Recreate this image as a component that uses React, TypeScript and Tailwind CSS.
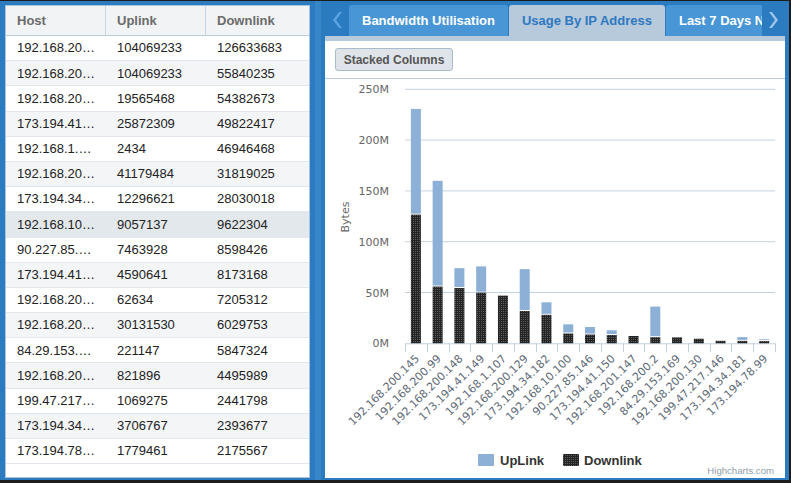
import React from "react";

const rows = [
  { host: "192.168.20…", full: "192.168.200.145", up: 104069233, down: 126633683 },
  { host: "192.168.20…", full: "192.168.200.99", up: 104069233, down: 55840235 },
  { host: "192.168.20…", full: "192.168.200.148", up: 19565468, down: 54382673 },
  { host: "173.194.41…", full: "173.194.41.149", up: 25872309, down: 49822417 },
  { host: "192.168.1.…", full: "192.168.1.107", up: 2434, down: 46946468 },
  { host: "192.168.20…", full: "192.168.200.129", up: 41179484, down: 31819025 },
  { host: "173.194.34…", full: "173.194.34.182", up: 12296621, down: 28030018 },
  { host: "192.168.10…", full: "192.168.10.100", up: 9057137, down: 9622304 },
  { host: "90.227.85.…", full: "90.227.85.146", up: 7463928, down: 8598426 },
  { host: "173.194.41…", full: "173.194.41.150", up: 4590641, down: 8173168 },
  { host: "192.168.20…", full: "192.168.201.147", up: 62634, down: 7205312 },
  { host: "192.168.20…", full: "192.168.200.2", up: 30131530, down: 6029753 },
  { host: "84.29.153.…", full: "84.29.153.169", up: 221147, down: 5847324 },
  { host: "192.168.20…", full: "192.168.200.130", up: 821896, down: 4495989 },
  { host: "199.47.217…", full: "199.47.217.146", up: 1069275, down: 2441798 },
  { host: "173.194.34…", full: "173.194.34.181", up: 3706767, down: 2393677 },
  { host: "173.194.78…", full: "173.194.78.99", up: 1779461, down: 2175567 },
];

const SELECTED = 7;

// chart geometry (svg coords, 460 x 399)
const X0 = 80;
const X1 = 450;
const Y0 = 264.3;
const PX_PER_M = 1.016;
const CAT = (X1 - X0) / rows.length;

const Chevron = ({ dir, color }: { dir: "l" | "r"; color: string }) => (
  <svg width="10" height="16" viewBox="0 0 10 16">
    {dir === "l" ? (
      <polygon points="7,0 10,0 4,8 10,16 7,16 1,8" fill={color} />
    ) : (
      <polygon points="3,0 0,0 6,8 0,16 3,16 9,8" fill={color} />
    )}
  </svg>
);

function Chart() {
  const font = "'DejaVu Sans', Verdana, sans-serif";
  return (
    <svg width="460" height="399" viewBox="0 0 460 399">
      <defs>
        <pattern id="dl" width="2" height="2" patternUnits="userSpaceOnUse">
          <rect width="2" height="2" fill="#242424" />
          <rect width="1" height="1" fill="#5c5c5c" />
        </pattern>
      </defs>

      {/* grid + y labels */}
      {[0, 1, 2, 3, 4, 5].map((k) => {
        const y = Y0 - k * 50 * PX_PER_M;
        return (
          <g key={k}>
            {k > 0 && <line x1={X0} x2={X1} y1={y} y2={y} stroke="#c4d3e1" strokeWidth="1" />}
            <text x="64" y={y + 4} textAnchor="end" fontFamily={font} fontSize="11" fill="#666">
              {k * 50}M
            </text>
          </g>
        );
      })}

      <text
        transform="translate(24 138) rotate(-90)"
        textAnchor="middle"
        fontFamily={font}
        fontSize="11"
        fill="#666"
      >
        Bytes
      </text>

      {/* x axis */}
      <line x1={X0} x2={X1} y1={Y0 + 0.5} y2={Y0 + 0.5} stroke="#c0d0e0" strokeWidth="1" />
      {Array.from({ length: rows.length + 1 }).map((_, i) => {
        const x = Math.round(X0 + i * CAT) + 0.5;
        return <line key={i} x1={x} x2={x} y1={Y0} y2={Y0 + 9} stroke="#c0d0e0" strokeWidth="1" />;
      })}

      {/* bars */}
      {rows.map((r, i) => {
        const cx = X0 + CAT * (i + 0.5);
        const hd = (r.down / 1e6) * PX_PER_M;
        const hu = (r.up / 1e6) * PX_PER_M;
        return (
          <g key={i}>
            <rect x={cx - 5} y={Y0 - hd} width="10" height={hd} fill="url(#dl)" />
            {hu > 1.2 && (
              <rect x={cx - 5} y={Y0 - hd - hu} width="10" height={hu - 1} fill="#8cb0d6" />
            )}
          </g>
        );
      })}

      {/* x labels */}
      {rows.map((r, i) => {
        const cx = X0 + CAT * (i + 0.5);
        return (
          <text
            key={i}
            transform={`translate(${cx + 4} ${Y0 + 16}) rotate(-45)`}
            textAnchor="end"
            fontFamily={font}
            fontSize="11"
            fill="#5e6a76"
          >
            {r.full}
          </text>
        );
      })}

      {/* legend */}
      <rect x="153" y="375" width="16" height="12" rx="1" fill="#8cb0d6" />
      <text x="175" y="386" fontFamily="'Liberation Sans', Arial, sans-serif" fontSize="13" fontWeight="bold" fill="#333">
        UpLink
      </text>
      <rect x="238" y="375" width="16" height="12" rx="1" fill="url(#dl)" />
      <text x="259" y="386" fontFamily="'Liberation Sans', Arial, sans-serif" fontSize="13" fontWeight="bold" fill="#333">
        Downlink
      </text>

      <text x="449" y="395" textAnchor="end" fontFamily="'Liberation Sans', Arial, sans-serif" fontSize="9.6" fill="#909ca8">
        Highcharts.com
      </text>
    </svg>
  );
}

export default function App() {
  return (
    <div className="w-[791px] h-[483px] bg-[#1d1d1d] pt-[1px] pr-[2px] pb-[3px] font-['Liberation_Sans',Arial,sans-serif]">
      <div className="flex h-full bg-[#2b7bc0]">
        {/* Left: host table */}
        <div className="ml-[5px] mt-[4px] w-[305px] h-[473px] border border-[#a9c4db] bg-white flex flex-col">
          <div className="grid grid-cols-[100px_100px_1fr] h-[30px] border-b border-[#b7cde0] bg-[#f1f3f5] text-[13px] font-bold text-[#6b6b6b]">
            <div className="flex items-center pl-[11px] border-r border-[#c3d6e6]">Host</div>
            <div className="flex items-center pl-[11px] border-r border-[#c3d6e6]">Uplink</div>
            <div className="flex items-center pl-[11px]">Downlink</div>
          </div>
          {rows.map((r, i) => (
            <div
              key={i}
              className={`grid grid-cols-[100px_100px_1fr] h-[25.2px] border-b border-[#e1e7ed] text-[13px] text-[#222] ${
                i === SELECTED ? "bg-[#e3e8ed]" : i % 2 === 1 ? "bg-[#f3f5f7]" : "bg-white"
              }`}
            >
              <div className="flex items-center pl-[11px]">{r.host}</div>
              <div className="flex items-center pl-[11px]">{r.up}</div>
              <div className="flex items-center pl-[11px]">{r.down}</div>
            </div>
          ))}
        </div>

        {/* splitter */}
        <div className="ml-[5px] w-[6px] h-full bg-[#3786c8]" />

        {/* Right: tabs + chart */}
        <div className="ml-[4px] w-[460px] flex flex-col">
          <div className="h-[35px] flex items-end">
            <div className="w-[24px] h-[31px] flex items-center pl-[7px] pb-[1px]">
              <Chevron dir="l" color="#5ca3df" />
            </div>
            <div className="w-[413px] h-[31px] flex gap-[1px] overflow-hidden text-[13px] font-bold whitespace-nowrap">
              <div className="h-full flex items-center px-[13px] rounded-t-[3px] bg-[#4896d6] text-white shrink-0">
                Bandwidth Utilisation
              </div>
              <div className="h-full flex items-center px-[13px] rounded-t-[3px] bg-[#b7cadc] text-[#2d78c0] shrink-0">
                Usage By IP Address
              </div>
              <div className="h-full flex items-center px-[13px] rounded-t-[3px] bg-[#4896d6] text-white shrink-0">
                Last 7 Days Network Usage
              </div>
            </div>
            <div className="w-[23px] h-[31px] flex items-center pl-[7px] pb-[1px]">
              <Chevron dir="r" color="#9cc5e9" />
            </div>
          </div>

          <div className="h-[442px] bg-white flex flex-col">
            <div className="h-[5px] bg-[#b7cadc]" />
            <div className="h-[38px] border-b border-[#b7cadc] flex items-start pt-[7px] pl-[10px]">
              <div className="h-[23px] w-[118px] flex items-center justify-center rounded-[3px] border border-[#a9bccd] bg-[#dee4ea] text-[12px] font-bold text-[#555]">
                Stacked Columns
              </div>
            </div>
            <Chart />
          </div>
        </div>
      </div>
    </div>
  );
}
